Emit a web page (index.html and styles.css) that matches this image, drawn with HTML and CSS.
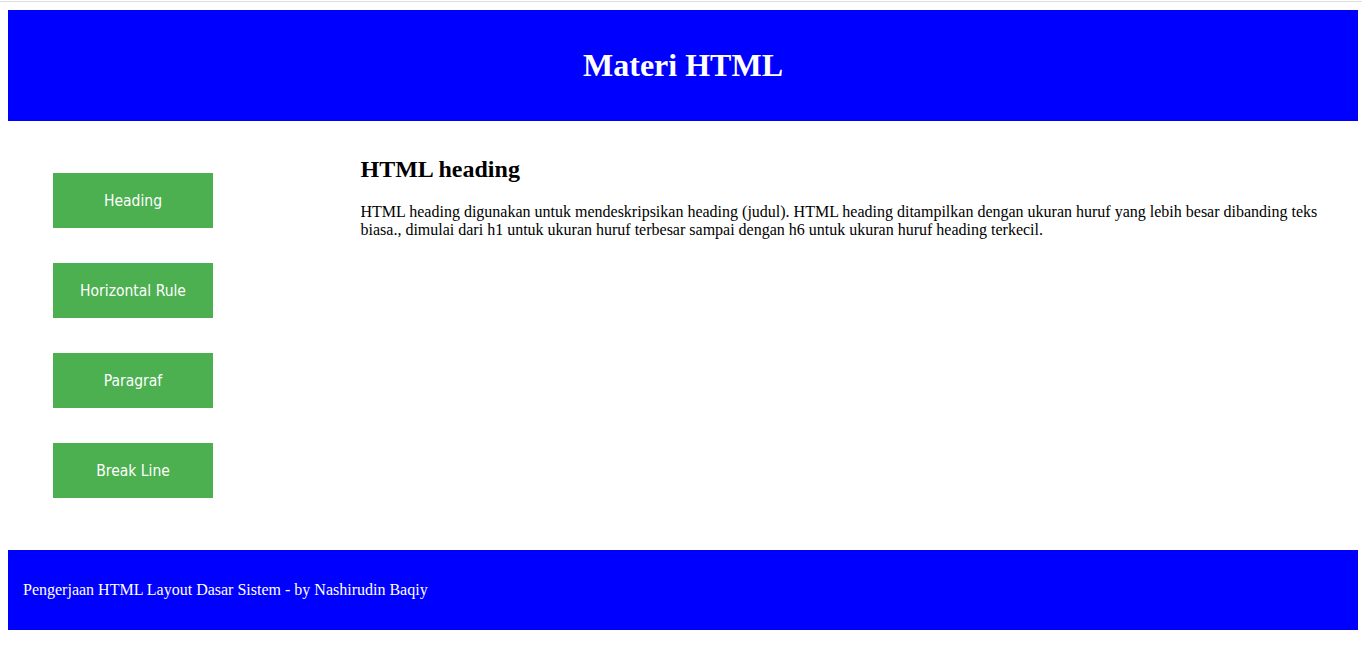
FILE: index.html
```html
<!DOCTYPE html>
<html lang="id">
<head>
<meta charset="utf-8">
<title>Materi HTML</title>
<link rel="stylesheet" href="styles.css">
</head>
<body>
<header class="site-header">
  <h1 class="site-title">Materi HTML</h1>
</header>
<section class="main">
  <nav class="side-nav">
    <a class="nav-btn" href="#">Heading</a>
    <a class="nav-btn" href="#">Horizontal Rule</a>
    <a class="nav-btn" href="#">Paragraf</a>
    <a class="nav-btn" href="#">Break Line</a>
  </nav>
  <article class="content">
    <h2 class="content-title">HTML heading</h2>
    <p class="content-text">HTML heading digunakan untuk mendeskripsikan heading (judul). HTML heading ditampilkan dengan ukuran huruf yang lebih besar dibanding teks biasa., dimulai dari h1 untuk ukuran huruf terbesar sampai dengan h6 untuk ukuran huruf heading terkecil.</p>
  </article>
</section>
<footer class="site-footer">
  <p class="footer-text">Pengerjaan HTML Layout Dasar Sistem - by Nashirudin Baqiy</p>
</footer>
</body>
</html>
```

FILE: styles.css
```css
html {
  padding-top: 2px;
  background: #fff linear-gradient(to bottom, #fff 0, #fff 1px, #dedede 1px, #dedede 2px, #fff 2px) no-repeat;
}

body {
  margin: 8px 4px 8px 8px;
  font-family: "Liberation Serif", "Times New Roman", serif;
  font-size: 16px;
  color: #000;
}

.site-header {
  background: #0000ff;
  height: 111px;
  display: flex;
  align-items: center;
  justify-content: center;
}

.site-title {
  margin: 0;
  color: #fff;
  font-size: 32px;
  font-weight: bold;
}

.main {
  display: flex;
}

.side-nav {
  width: 25%;
  flex: none;
  box-sizing: border-box;
  padding: 52px 0 52px 45px;
  display: flex;
  flex-direction: column;
  gap: 35px;
}

.nav-btn {
  display: flex;
  align-items: center;
  justify-content: center;
  width: 160px;
  height: 55px;
  background: #4caf50;
  color: #fff;
  text-decoration: none;
  font-family: "DejaVu Sans Condensed", "DejaVu Sans", sans-serif;
  font-stretch: condensed;
  font-size: 15.5px;
}

.content {
  flex: 1;
  padding: 15px;
}

.content-title {
  font-size: 24px;
  margin: 19.92px 0;
}

.content-text {
  margin: 16px 0;
  padding-right: 15px;
}

.site-footer {
  background: #0000ff;
  height: 80px;
  display: flex;
  align-items: center;
  padding: 0 15px;
}

.footer-text {
  margin: 0;
  color: #fff;
}
```
